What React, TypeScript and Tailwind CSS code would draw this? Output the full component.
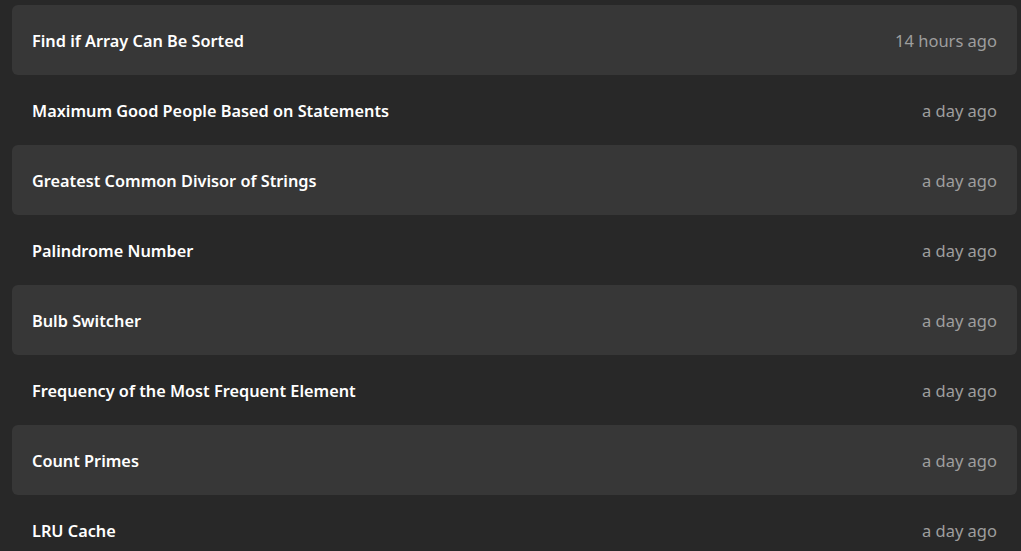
import React from "react";

const rows = [
  ["Find if Array Can Be Sorted", "14 hours ago"],
  ["Maximum Good People Based on Statements", "a day ago"],
  ["Greatest Common Divisor of Strings", "a day ago"],
  ["Palindrome Number", "a day ago"],
  ["Bulb Switcher", "a day ago"],
  ["Frequency of the Most Frequent Element", "a day ago"],
  ["Count Primes", "a day ago"],
  ["LRU Cache", "a day ago"],
];

export default function App() {
  return (
    <div
      className="h-[551px] overflow-hidden bg-[#282828] pt-[5px] pl-[12px] pr-[4px]"
      style={{ fontFamily: '"Noto Sans", "Open Sans", sans-serif' }}
    >
      <div className="flex flex-col">
        {rows.map(([t, d], i) => (
          <div
            key={i}
            className={`flex h-[70px] shrink-0 items-center justify-between rounded-[6px] px-[20px] pt-[2px] ${
              i % 2 === 0 ? "bg-[#373737]" : ""
            }`}
          >
            <span className="text-[16.3px] font-semibold text-white">{t}</span>
            <span className="text-[16.5px] text-[#9e9e9e]">{d}</span>
          </div>
        ))}
      </div>
    </div>
  );
}
